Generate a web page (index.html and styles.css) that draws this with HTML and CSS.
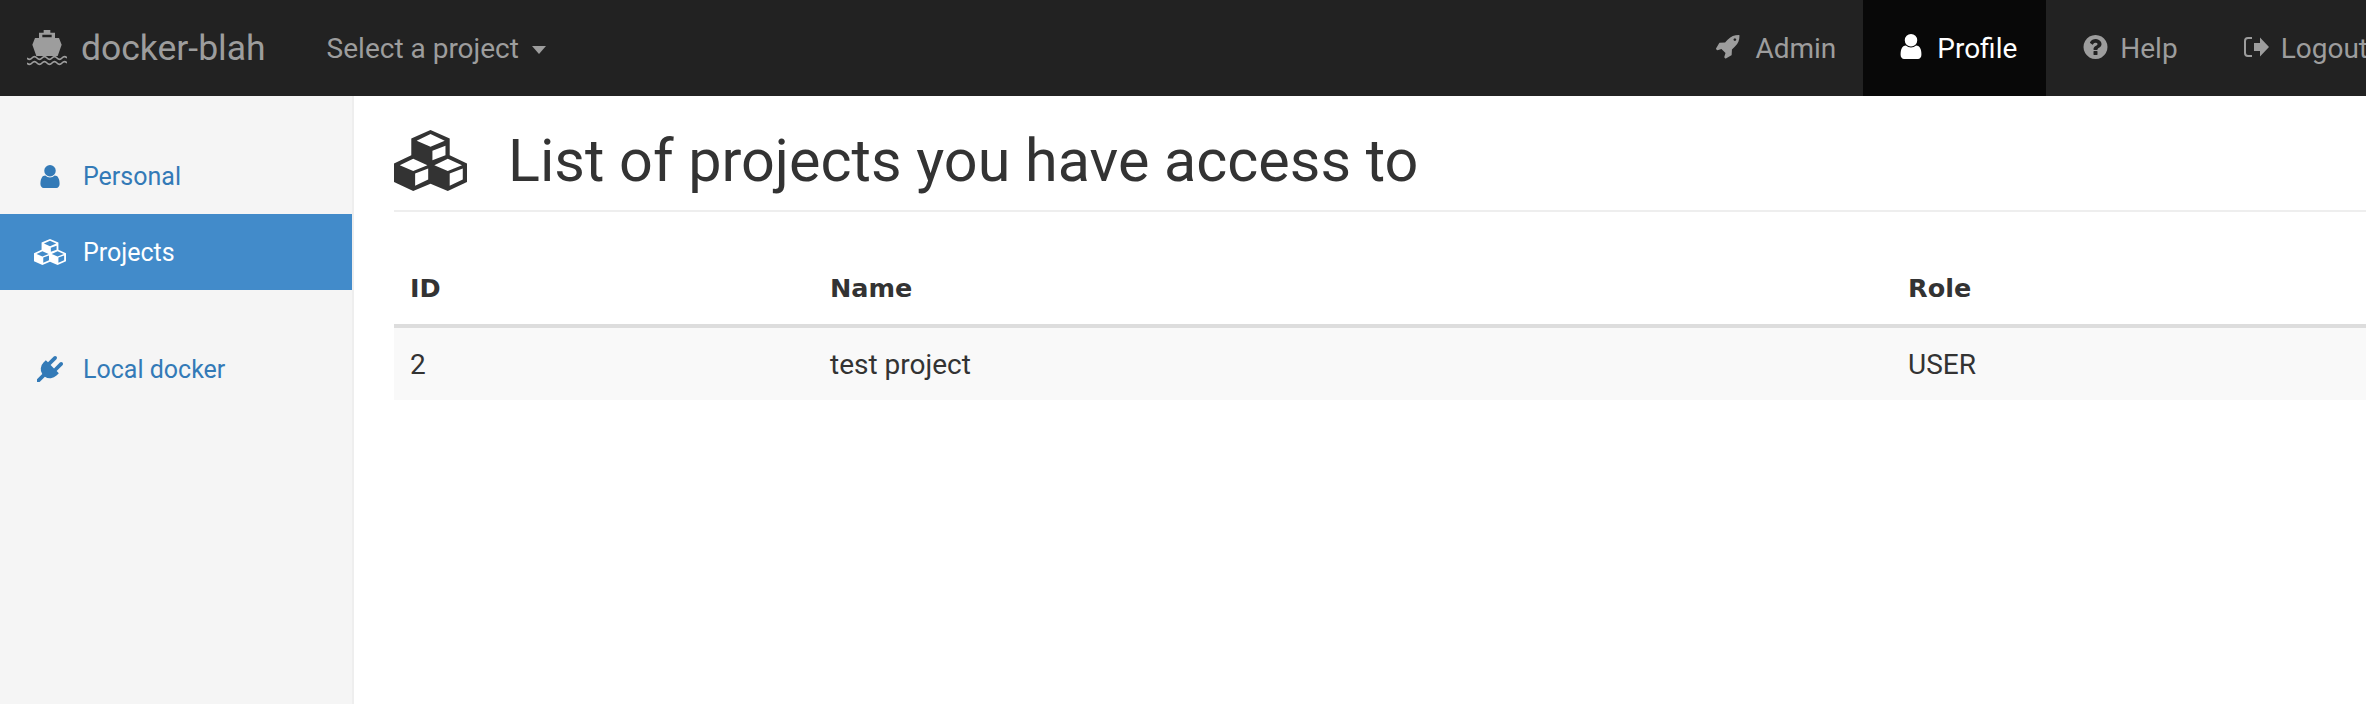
FILE: index.html
```html
<!DOCTYPE html>
<html lang="en">
<head>
    <title>docker-blah</title>
    <meta charset="UTF-8">
    <link rel="stylesheet" href="styles.css">
</head>
<body>
<svg class="defs" width="0" height="0">
    <symbol id="i-user" viewBox="256 128 1280 1536"><path d="M1536 1399q0 109-62.5 187t-150.5 78h-854q-88 0-150.5-78t-62.5-187q0-85 8.5-160.5t31.5-152 58.5-131 94-89 134.5-34.5q131 128 313 128t313-128q76 0 134.5 34.5t94 89 58.5 131 31.5 152 8.5 160.5zm-256-887q0 159-112.5 271.5t-271.5 112.5-271.5-112.5-112.5-271.5 112.5-271.5 271.5-112.5 271.5 112.5 112.5 271.5z"/></symbol>
    <symbol id="i-cubes" viewBox="0 0 190 182" preserveAspectRatio="none"><path fill-rule="evenodd" d="M95 0L145 25V75L190 100V155L140 182L95 160L50 182L0 155V100L45 75V25ZM95 12L59 32L95 50L132 32ZM100 62V90L134 75V47ZM50 86L15 105L50 122L87 105ZM55 130V166L89 148V115ZM140 86L105 105L140 122L177 105ZM145 130V166L179 148V115Z"/></symbol>
</svg>
<div class="page">
    <header class="navbar">
        <a class="brand">
            <svg class="ship" viewBox="0 0 120 108">
                <path fill-rule="evenodd" d="M50 0H70V8H84V24H96L104 44L92 78H28L16 44L24 24H36V8H50ZM46 14V22H74V14Z"/>
                <path class="waves" d="M0 84q7.5 8 15 0t15 0 15 0 15 0 15 0 15 0 15 0 15 0M0 99q7.5 8 15 0t15 0 15 0 15 0 15 0 15 0 15 0 15 0"/>
            </svg>
            docker-blah
        </a>
        <a class="project-select">Select a project <span class="caret"></span></a>
        <nav class="nav-right">
            <a class="nav-item nav-admin">
                <svg class="icon" viewBox="64 128 1664 1664"><path d="M1504 448q0-40-28-68t-68-28-68 28-28 68 28 68 68 28 68-28 28-68zm224-288q0 249-75.5 430.5t-253.5 360.5q-81 80-195 176l-20 379q-2 16-16 26l-384 224q-7 4-16 4-12 0-23-9l-64-64q-13-14-8-32l85-276-281-281-276 85q-3 1-9 1-14 0-23-9l-64-64q-17-19-5-39l224-384q10-14 26-16l379-20q96-114 176-195 188-187 358-258t431-71q14 0 24 9.5t10 22.5z"/></svg>
                Admin
            </a>
            <a class="nav-item active">
                <svg class="icon icon-user"><use href="#i-user"/></svg>
                Profile
            </a>
            <a class="nav-item nav-tight">
                <svg class="icon" viewBox="128 128 1536 1536"><path d="M1024 1376v-192q0-14-9-23t-23-9h-192q-14 0-23 9t-9 23v192q0 14 9 23t23 9h192q14 0 23-9t9-23zm256-672q0-88-55.5-163t-138.5-116-170-41q-243 0-371 213-15 24 8 42l132 100q7 6 19 6 16 0 25-12 53-68 86-92 34-24 86-24 48 0 85.5 26t37.5 59q0 38-20 61t-68 45q-63 28-115.5 86.5t-52.5 125.5v36q0 14 9 23t23 9h192q14 0 23-9t9-23q0-19 21.5-49.5t54.5-49.5q32-18 49-28.5t46-35 44.5-48 28-60.5 12.5-81zm384 192q0 209-103 385.5t-279.5 279.5-385.5 103-385.5-103-279.5-279.5-103-385.5 103-385.5 279.5-279.5 385.5-103 385.5 103 279.5 279.5 103 385.5z"/></svg>
                Help
            </a>
            <a class="nav-item nav-tight">
                <svg class="icon" viewBox="0 0 25 20">
                    <path class="bracket" d="M8 1H4Q1 1 1 4V16Q1 19 4 19H8"/>
                    <path d="M10 6H16V0.500L25 10L16 19.500V14H10Z"/>
                </svg>
                Logout
            </a>
        </nav>
    </header>
    <div class="layout">
        <aside class="sidebar">
            <ul class="side-nav">
                <li><a><svg class="side-icon side-user"><use href="#i-user"/></svg>Personal</a></li>
                <li class="active"><a><svg class="side-icon"><use href="#i-cubes"/></svg>Projects</a></li>
            </ul>
            <ul class="side-nav">
                <li><a>
                    <svg class="side-icon" viewBox="0 0 1792 1792"><path d="M1755 453q37 38 37 90.500t-37 90.500l-401 400 150 150-160 160q-163 163-389.500 186.500t-411.500-100.500l-362 362h-181v-181l362-362q-124-185-100.500-411.500t186.500-389.500l160-160 150 150 400-401q38-37 91-37t90 37 37 90.500-37 90.500l-400 401 234 234 401-400q38-37 91-37t90 37z"/></svg>Local docker
                </a></li>
            </ul>
        </aside>
        <main class="main">
            <h1 class="page-header"><svg class="header-icon"><use href="#i-cubes"/></svg>List of projects you have access to</h1>
            <table class="table">
                <thead>
                    <tr><th class="col-id">ID</th><th class="col-name">Name</th><th>Role</th></tr>
                </thead>
                <tbody>
                    <tr><td>2</td><td>test project</td><td>USER</td></tr>
                </tbody>
            </table>
        </main>
    </div>
</div>
</body>
</html>
```

FILE: styles.css
```css
html, body {
    overflow: hidden;
}

body {
    margin: 0;
    height: 704px;
    font-family: Roboto, "DejaVu Sans", sans-serif;
    font-size: 28px;
    color: #333;
}

.defs {
    display: block;
}

.page {
    width: 2397px;
}

.navbar {
    display: flex;
    align-items: center;
    height: 96px;
    background-color: #222;
    color: #9d9d9d;
}

.brand {
    display: flex;
    align-items: center;
    margin-left: 27px;
    font-size: 35.5px;
}

.ship {
    width: 40px;
    height: 36px;
    margin: 0 14px 0 0;
    fill: currentColor;
}

.waves {
    fill: none;
    stroke: currentColor;
    stroke-width: 5;
}

.project-select {
    margin-left: 61px;
}

.caret {
    display: inline-block;
    margin-left: 6px;
    vertical-align: middle;
    border-top: 8px solid;
    border-left: 7.5px solid transparent;
    border-right: 7.5px solid transparent;
}

.nav-right {
    display: flex;
    height: 100%;
    margin-left: auto;
}

.nav-item {
    display: flex;
    align-items: center;
    gap: 15px;
    padding: 0 29px 0 37px;
}

.nav-tight {
    gap: 12px;
}

.nav-admin {
    padding-right: 27px;
}

.nav-item.active {
    background-color: #080808;
    color: #fff;
}

.icon {
    width: 25px;
    height: 24px;
    margin-bottom: 3px;
    fill: currentColor;
}

.icon-user {
    width: 22px;
    height: 25px;
}

.bracket {
    fill: none;
    stroke: currentColor;
    stroke-width: 2;
}

.layout {
    display: flex;
    height: 608px;
}

.sidebar {
    flex: none;
    width: 352px;
    padding-top: 42px;
    background-color: #f5f5f5;
    border-right: 2px solid #eee;
    font-size: 25px;
}

.side-nav {
    list-style: none;
    margin: 0 0 41px;
    padding: 0;
}

.side-nav a {
    display: flex;
    align-items: center;
    height: 76px;
    color: #337ab7;
}

.side-nav .active a {
    background-color: #428bca;
    color: #fff;
}

.side-icon {
    flex: none;
    width: 32px;
    height: 26px;
    margin: 0 17px 0 34px;
    fill: currentColor;
}

.side-user {
    height: 23px;
}

.main {
    flex: 1;
    padding: 0 0 0 40px;
}

.page-header {
    display: flex;
    align-items: center;
    height: 100px;
    margin: 0 0 40px;
    padding-top: 14px;
    border-bottom: 2px solid #eee;
    font-size: 59.3px;
    font-weight: 400;
}

.header-icon {
    width: 73px;
    height: 61px;
    margin-right: 41px;
    fill: currentColor;
}

.table {
    width: 100%;
    border-collapse: collapse;
    table-layout: fixed;
}

.table th, .table td {
    height: 72px;
    padding: 0 16px;
    text-align: left;
}

.table th {
    border-bottom: 4px solid #ddd;
    font-family: "DejaVu Sans", sans-serif;
    font-size: 25.5px;
}

.table td {
    background-color: #f9f9f9;
}

.col-id {
    width: 388px;
}

.col-name {
    width: 1046px;
}
```
